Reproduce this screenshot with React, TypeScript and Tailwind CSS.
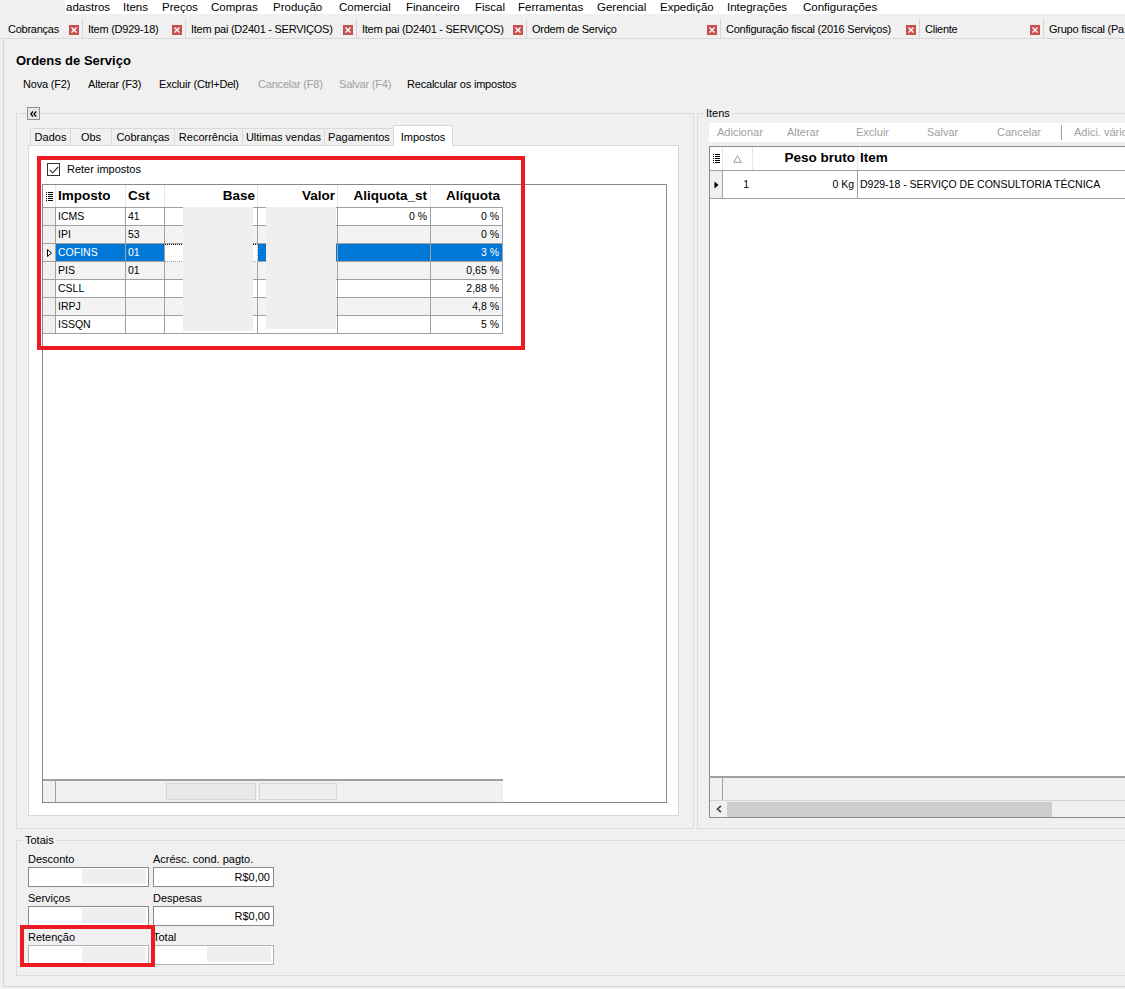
import React from 'react';

// Tela "Ordens de Serviço" - aba Impostos
const MENU: [string, number][] = [
  ['adastros', 57], ['Itens', 39], ['Preços', 49], ['Compras', 62], ['Produção', 66], ['Comercial', 67],
  ['Financeiro', 69], ['Fiscal', 43], ['Ferramentas', 79], ['Gerencial', 63], ['Expedição', 67],
  ['Integrações', 76], ['Configurações', 90],
];

const DOC_TABS: [string, number][] = [
  ['Cobranças', 83], ['Item (D929-18)', 103], ['Item pai (D2401 - SERVIÇOS)', 171], ['Item pai (D2401 - SERVIÇOS)', 170],
  ['Ordem de Serviço', 194], ['Configuração fiscal (2016 Serviços)', 199], ['Cliente', 124], ['Grupo fiscal (Pa', 140],
];

const TOOLBAR: [string, number, boolean][] = [
  ['Nova (F2)', 65, false], ['Alterar (F3)', 71, false], ['Excluir (Ctrl+Del)', 99, false],
  ['Cancelar (F8)', 81, true], ['Salvar (F4)', 68, true], ['Recalcular os impostos', 130, false],
];

const PAGE_TABS: [string, number][] = [
  ['Dados', 41], ['Obs', 42], ['Cobranças', 64], ['Recorrência', 69], ['Ultimas vendas', 83], ['Pagamentos', 70],
];

interface Imposto {
  nome: string;
  cst: string;
  st: string;
  aliq: string;
}

const IMPOSTOS: Imposto[] = [
  { nome: 'ICMS', cst: '41', st: '0 %', aliq: '0 %' },
  { nome: 'IPI', cst: '53', st: '', aliq: '0 %' },
  { nome: 'COFINS', cst: '01', st: '', aliq: '3 %' },
  { nome: 'PIS', cst: '01', st: '', aliq: '0,65 %' },
  { nome: 'CSLL', cst: '', st: '', aliq: '2,88 %' },
  { nome: 'IRPJ', cst: '', st: '', aliq: '4,8 %' },
  { nome: 'ISSQN', cst: '', st: '', aliq: '5 %' },
];

const SELECTED = 2;

function CloseBox() {
  return (
    <div className="w-[10px] h-[10px] bg-[#c75050] flex items-center justify-center shrink-0">
      <svg width="6" height="6" viewBox="0 0 6 6">
        <path d="M0.5 0.5 L5.5 5.5 M5.5 0.5 L0.5 5.5" stroke="white" strokeWidth="1.4" />
      </svg>
    </div>
  );
}

function ListIcon() {
  return (
    <svg width="7" height="9" viewBox="0 0 7 9">
      {[0, 2, 4, 6, 8].map((y) => (
        <g key={y}>
          <rect x="0" y={y} width="1" height="1" fill="#000" />
          <rect x="2" y={y} width="5" height="1" fill="#000" />
        </g>
      ))}
    </svg>
  );
}

function Field({ label, value, dim }: { label: string; value?: string; dim?: boolean }) {
  return (
    <div className="flex flex-col">
      <div className="h-[14px] leading-[14px]">{label}</div>
      <div
        className={`relative mt-[1px] h-[20px] bg-white border flex items-center justify-end pr-[3px] ${
          dim ? 'border-[#b4b4b4]' : 'border-[#8a8a8a]'
        }`}
      >
        {value ? (
          <span>{value}</span>
        ) : (
          <div className="absolute left-[53px] top-[1px] w-[64px] h-[15px] bg-[#efefef]" />
        )}
      </div>
    </div>
  );
}

export default function App() {
  return (
    <div className="relative w-[1125px] h-[989px] overflow-hidden bg-[#f0f0f0] text-black font-['Liberation_Sans',Arial,sans-serif] text-[11px]">
      {/* Menu */}
      <div className="flex h-[14px]">
        <div className="w-[65px] bg-[#f0f0f0]" />
        <div className="flex-1 bg-white flex items-center pl-[1px] text-[11.5px] leading-[13px]">
          {MENU.map(([m, w]) => (
            <div key={m} style={{ width: w }} className="shrink-0 whitespace-nowrap">
              {m}
            </div>
          ))}
        </div>
      </div>

      {/* Abas de documentos */}
      <div className="h-[25px] flex items-end border-b border-[#d9d9d9] tracking-[-0.25px]">
        {DOC_TABS.map(([t, w], i) => (
          <div
            key={i}
            style={{ width: w }}
            className={`shrink-0 h-[19px] pt-[2px] flex items-center justify-between border-r border-[#d6d6d6] pr-[3px] whitespace-nowrap ${
              i === 0 ? 'pl-[8px]' : 'pl-[5px]'
            }`}
          >
            <span>{t}</span>
            <CloseBox />
          </div>
        ))}
      </div>

      {/* Conteúdo */}
      <div className="ml-[3px] h-[948px] border-l border-b border-[#d5d5d5] bg-[#f0f0f0] flex flex-col">
        <div className="pl-[12px] pt-[15px] h-[29px] leading-[14px] text-[13px] font-bold shrink-0">Ordens de Serviço</div>
        <div className="flex pl-[19px] mt-[7px] h-[18px] items-center shrink-0 tracking-[-0.2px]">
          {TOOLBAR.map(([t, w, off]) => (
            <div key={t} style={{ width: w }} className={`shrink-0 whitespace-nowrap ${off ? 'text-[#a0a0a0]' : ''}`}>
              {t}
            </div>
          ))}
        </div>

        <div className="flex mt-[20px] h-[716px] shrink-0">
          {/* Grupo esquerdo */}
          <div className="relative shrink-0 ml-[12px] w-[678px] h-full border border-[#dcdcdc] pt-[11px]">
            <div className="absolute left-[10px] -top-[7px] w-[13px] h-[13px] border border-[#8f8f8f] bg-[#e6e6e6] flex items-center justify-center">
              <svg width="7" height="6" viewBox="0 0 7 6">
                <path d="M3 0.5 L0.8 3 L3 5.5 M6.2 0.5 L4 3 L6.2 5.5" stroke="#000" strokeWidth="1.2" fill="none" />
              </svg>
            </div>

            <div className="flex items-end ml-[13px] h-[21px] -mb-[1px] relative z-10">
              {PAGE_TABS.map(([t, w]) => (
                <div
                  key={t}
                  style={{ width: w }}
                  className="shrink-0 h-[18px] flex items-center justify-center border border-[#d9d9d9] -ml-[1px] first:ml-0 bg-[#f0f0f0] whitespace-nowrap"
                >
                  {t}
                </div>
              ))}
              <div className="shrink-0 w-[60px] h-[21px] -ml-[1px] border border-b-0 border-[#d9d9d9] bg-white flex items-start justify-center pt-[3px]">
                Impostos
              </div>
            </div>

            <div className="ml-[11px] w-[651px] h-[671px] bg-white border border-[#d9d9d9] flex flex-col">
              <div className="flex items-center gap-[7px] pl-[18px] pt-[17px] h-[30px]">
                <div className="w-[13px] h-[13px] border border-[#333] bg-white flex items-center justify-center">
                  <svg width="10" height="8" viewBox="0 0 10 8">
                    <path d="M0.8 4 L3.6 6.8 L9.2 1" stroke="#333" strokeWidth="1.1" fill="none" />
                  </svg>
                </div>
                <span>Reter impostos</span>
              </div>

              {/* Grade de impostos */}
              <div className="relative mt-[8px] ml-[13px] w-[625px] h-[619px] border border-[#8a8a8a] flex flex-col">
                <div className="flex h-[23px] border-b border-[#a0a0a0] w-[460px] font-bold text-[13.5px]">
                  <div className="w-[13px] shrink-0 flex items-center justify-center border-r border-[#e6e6e6]">
                    <ListIcon />
                  </div>
                  <div className="w-[70px] shrink-0 pl-[2px] flex items-center border-r border-[#e6e6e6]">Imposto</div>
                  <div className="w-[39px] shrink-0 pl-[2px] flex items-center border-r border-[#e6e6e6]">Cst</div>
                  <div className="w-[93px] shrink-0 pr-[2px] flex items-center justify-end border-r border-[#e6e6e6]">Base</div>
                  <div className="w-[80px] shrink-0 pr-[2px] flex items-center justify-end border-r border-[#e6e6e6]">Valor</div>
                  <div className="w-[93px] shrink-0 pr-[3px] flex items-center justify-end border-r border-[#e6e6e6]">Aliquota_st</div>
                  <div className="w-[72px] shrink-0 pr-[3px] flex items-center justify-end">Alíquota</div>
                </div>
                {IMPOSTOS.map((r, i) => {
                  const sel = i === SELECTED;
                  const bg = sel ? 'bg-[#0078d7] text-white' : i % 2 === 1 ? 'bg-[#f3f3f3]' : 'bg-white';
                  return (
                    <div key={r.nome} className="flex h-[18px] w-[460px] text-[10.5px] leading-[17px]">
                      <div className="w-[13px] shrink-0 bg-[#f0f0f0] border-r border-b border-[#a0a0a0] flex items-center justify-center">
                        {sel && (
                          <svg width="5" height="8" viewBox="0 0 5 8">
                            <path d="M0.5 0.5 L4.5 4 L0.5 7.5 Z" fill="white" stroke="#000" strokeWidth="1" />
                          </svg>
                        )}
                      </div>
                      <div className={`w-[70px] shrink-0 pl-[2px] border-r border-b border-[#a0a0a0] ${bg}`}>{r.nome}</div>
                      <div className={`w-[39px] shrink-0 pl-[2px] border-r border-b border-[#a0a0a0] ${bg}`}>{r.cst}</div>
                      <div
                        className={`w-[93px] shrink-0 border-r border-b border-[#a0a0a0] ${
                          sel ? 'bg-white border-t border-t-black border-dotted' : bg
                        }`}
                      />
                      <div className={`w-[80px] shrink-0 border-r border-b border-[#a0a0a0] ${bg}`} />
                      <div className={`w-[93px] shrink-0 pr-[3px] text-right border-r border-b border-[#a0a0a0] ${bg}`}>{r.st}</div>
                      <div className={`w-[72px] shrink-0 pr-[3px] text-right border-r border-b border-[#a0a0a0] ${bg}`}>{r.aliq}</div>
                    </div>
                  );
                })}
                <div className="flex-1" />
                <div className="relative h-[23px] w-[460px] bg-[#f0f0f0] border-t-2 border-[#a0a0a0] flex">
                  <div className="w-[13px] border-r border-[#a0a0a0]" />
                  <div className="absolute left-[123px] top-[2px] w-[90px] h-[17px] bg-[#e8e9e9] border border-[#d5d8d8]" />
                  <div className="absolute left-[216px] top-[2px] w-[78px] h-[17px] bg-[#eeeeee] border border-[#d5d8d8]" />
                </div>
                {/* áreas borradas */}
                <div className="absolute left-[140px] top-[22px] w-[70px] h-[124px] bg-[#efefef]" />
                <div className="absolute left-[223px] top-[22px] w-[70px] h-[122px] bg-[#efefef]" />
              </div>
            </div>
          </div>

          {/* Grupo Itens */}
          <div className="relative shrink-0 ml-[3px] w-[450px] h-full border border-[#dcdcdc] pt-[9px] pl-[11px]">
            <div className="absolute left-[6px] -top-[8px] px-[2px] bg-[#f0f0f0] leading-[14px]">Itens</div>
            <div className="h-[19px] bg-white flex items-center pl-[8px] text-[#a0a0a0] whitespace-nowrap">
              <div className="w-[70px] shrink-0">Adicionar</div>
              <div className="w-[69px] shrink-0">Alterar</div>
              <div className="w-[71px] shrink-0">Excluir</div>
              <div className="w-[70px] shrink-0">Salvar</div>
              <div className="w-[64px] shrink-0">Cancelar</div>
              <div className="w-[1px] h-[15px] bg-[#a0a0a0] mr-[12px] shrink-0" />
              <div className="shrink-0">Adici. vários</div>
            </div>
            <div className="mt-[4px] h-[672px] border border-[#8a8a8a] bg-white flex flex-col">
              <div className="flex h-[24px] border-b border-[#a0a0a0] font-bold text-[13.5px]">
                <div className="w-[13px] shrink-0 flex items-center justify-center border-r border-[#e6e6e6]">
                  <ListIcon />
                </div>
                <div className="w-[30px] shrink-0 flex items-center justify-center border-r border-[#e6e6e6]">
                  <svg width="9" height="8" viewBox="0 0 9 8">
                    <path d="M4.5 0.7 L8.3 7.3 L0.7 7.3 Z" fill="none" stroke="#9a9a9a" strokeWidth="1" />
                  </svg>
                </div>
                <div className="w-[105px] shrink-0 pr-[2px] flex items-center justify-end border-r border-[#e6e6e6]">Peso bruto</div>
                <div className="flex-1 pl-[2px] flex items-center">Item</div>
              </div>
              <div className="flex h-[28px] border-b border-[#a0a0a0] text-[10.5px]">
                <div className="w-[13px] shrink-0 bg-[#f0f0f0] border-r border-[#a0a0a0] flex items-center justify-center">
                  <svg width="5" height="8" viewBox="0 0 5 8">
                    <path d="M0.5 0.5 L4.5 4 L0.5 7.5 Z" fill="#000" />
                  </svg>
                </div>
                <div className="w-[30px] shrink-0 pr-[4px] flex items-center justify-end">1</div>
                <div className="w-[105px] shrink-0 pr-[3px] flex items-center justify-end border-r border-[#a0a0a0]">0 Kg</div>
                <div className="flex-1 pl-[2px] flex items-center whitespace-nowrap">D929-18 - SERVIÇO DE CONSULTORIA TÉCNICA</div>
              </div>
              <div className="flex-1" />
              <div className="h-[24px] bg-[#f0f0f0] border-t-2 border-[#a0a0a0] flex">
                <div className="w-[13px] border-r border-[#a0a0a0]" />
              </div>
              <div className="h-[17px] bg-[#f0f0f0] border-t border-[#d4d4d4] flex items-center">
                <div className="w-[17px] flex items-center justify-center">
                  <svg width="6" height="8" viewBox="0 0 6 8">
                    <path d="M5 0.8 L1.5 4 L5 7.2" stroke="#404040" strokeWidth="1.6" fill="none" />
                  </svg>
                </div>
                <div className="w-[325px] h-[15px] bg-[#cdcdcd]" />
              </div>
            </div>
          </div>
        </div>

        {/* Totais */}
        <div className="relative shrink-0 mt-[11px] ml-[12px] h-[136px] border border-r-0 border-[#dcdcdc] pl-[11px] pt-[11px]">
          <div className="absolute left-[6px] -top-[8px] px-[2px] bg-[#f0f0f0] leading-[14px]">Totais</div>
          <div className="grid grid-cols-[121px_121px] gap-x-[4px] gap-y-[4px]">
            <Field label="Desconto" />
            <Field label="Acrésc. cond. pagto." value="R$0,00" />
            <Field label="Serviços" />
            <Field label="Despesas" value="R$0,00" />
            <Field label="Retenção" dim />
            <Field label="Total" dim />
          </div>
        </div>
      </div>

      {/* marcações vermelhas */}
      <div className="absolute left-[37px] top-[156px] w-[488px] h-[194px] border-4 border-[#ed1c24]" />
      <div className="absolute left-[20px] top-[925px] w-[135px] h-[42px] border-4 border-[#ed1c24]" />
    </div>
  );
}
